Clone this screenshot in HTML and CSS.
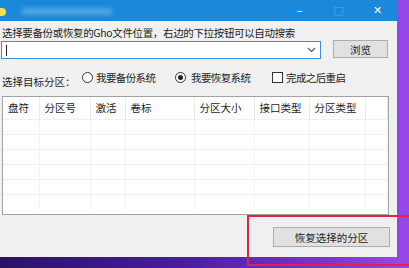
FILE: index.html
```html
<!DOCTYPE html>
<html lang="zh-CN">
<head>
    <meta charset="UTF-8">
    <title>一键恢复</title>
    <link rel="stylesheet" href="styles.css">
</head>
<body>
    <div class="window">
        <div class="titlebar">
            <span class="appIcon"></span>
            <span class="titleBlur"></span>
            <div class="controls">
                <span class="ctl">&#8211;</span>
                <span class="ctl dim">&#9633;</span>
                <span class="ctl">&#10005;</span>
            </div>
        </div>

        <div class="content">
            <div class="hint">选择要备份或恢复的Gho文件位置，右边的下拉按钮可以自动搜索</div>
            <div class="pathRow">
                <div class="combo">
                    <span class="caret"></span>
                    <svg class="chevron" width="9" height="6" viewBox="0 0 9 6"><path d="M1 1 L4.5 4.5 L8 1" fill="none" stroke="#555" stroke-width="1.1"/></svg>
                </div>
                <button class="btn browse">浏览</button>
            </div>

            <div class="optRow">
                <span class="optLabel">选择目标分区：</span>
                <label class="opt first"><span class="radio"></span>我要备份系统</label>
                <label class="opt second"><span class="radio checked"></span>我要恢复系统</label>
                <label class="opt"><span class="check"></span>完成之后重启</label>
            </div>

            <div class="listBox">
                <table class="list">
                    <colgroup>
                        <col style="width:36px"><col style="width:51px"><col style="width:35px"><col style="width:69px">
                        <col style="width:60px"><col style="width:55px"><col style="width:56px"><col>
                    </colgroup>
                    <thead>
                        <tr><th>盘符</th><th>分区号</th><th>激活</th><th>卷标</th><th>分区大小</th><th>接口类型</th><th>分区类型</th><th></th></tr>
                    </thead>
                    <tbody>
                        <tr><td></td><td></td><td></td><td></td><td></td><td></td><td></td><td></td></tr>
                        <tr><td></td><td></td><td></td><td></td><td></td><td></td><td></td><td></td></tr>
                        <tr><td></td><td></td><td></td><td></td><td></td><td></td><td></td><td></td></tr>
                        <tr><td></td><td></td><td></td><td></td><td></td><td></td><td></td><td></td></tr>
                        <tr><td></td><td></td><td></td><td></td><td></td><td></td><td></td><td></td></tr>
                        <tr><td></td><td></td><td></td><td></td><td></td><td></td><td></td><td></td></tr>
                    </tbody>
                </table>
            </div>

            <div class="footer">
                <button class="btn restore">恢复选择的分区</button>
            </div>
        </div>
    </div>

    <div class="highlight"></div>
</body>
</html>
```

FILE: styles.css
```css
body {
    margin: 0;
    width: 409px;
    height: 268px;
    overflow: hidden;
    position: relative;
    font-family: "Noto Sans CJK SC", "Noto Sans", sans-serif;
    font-size: 10.5px;
    color: #1c1c1c;
    background: linear-gradient(90deg, #2a1266 0%, #4a1d9c 45%, #7a34d8 80%, #9848ea 100%);
}
/* Fenster */
.window {
    width: 397px;
    height: 257px;
    background: #f0f0f0;
    display: flex;
    flex-direction: column;
}
.titlebar {
    height: 21px;
    background: #1b88d9;
    display: flex;
    align-items: center;
    flex-shrink: 0;
}
.appIcon {
    width: 6px;
    height: 8px;
    margin-top: 2px;
    background: #f2e04a;
    border-radius: 0 4px 4px 0;
}
.titleBlur {
    width: 90px;
    height: 7px;
    margin-left: 16px;
    margin-top: 2px;
    background: rgba(120, 190, 240, 0.55);
    filter: blur(2px);
}
.controls {
    margin-left: auto;
    display: flex;
    color: #fff;
}
.ctl {
    width: 39px;
    text-align: center;
    font-family: "DejaVu Sans", sans-serif;
    font-size: 11px;
    line-height: 21px;
}
.ctl.dim {
    color: #5aa9e6;
}
/* Inhalt */
.content {
    padding: 6px 0 0 2px;
    display: flex;
    flex-direction: column;
}
.hint {
    line-height: 12px;
    height: 12px;
    letter-spacing: -0.35px;
}
.pathRow {
    display: flex;
    align-items: flex-start;
    margin-top: 1px;
    margin-left: -1px;
}
.combo {
    width: 318px;
    height: 16px;
    margin-top: 1px;
    background: #fff;
    border: 1px solid #3c8fd8;
    display: flex;
    align-items: center;
}
.caret {
    width: 1px;
    height: 11px;
    margin-left: 4px;
    background: #222;
}
.chevron {
    margin-left: auto;
    margin-right: 4px;
}
.btn {
    font-family: inherit;
    font-size: 10.5px;
    color: #1c1c1c;
    background: #e1e1e1;
    border: 1px solid #adadad;
    padding: 0;
    cursor: pointer;
}
.browse {
    width: 55px;
    height: 18px;
    margin-left: 12px;
}
/* Optionen */
.optRow {
    display: flex;
    align-items: center;
    height: 14px;
    margin-top: 11px;
}
.optLabel {
    width: 80px;
    margin-top: 8px;
}
.opt {
    display: flex;
    align-items: center;
    gap: 3px;
    letter-spacing: -0.6px;
}
.opt.first {
    width: 93px;
}
.opt.second {
    width: 97px;
    gap: 5px;
}
.radio {
    width: 9px;
    height: 9px;
    border: 1px solid #333;
    border-radius: 50%;
    background: #fff;
    display: flex;
    align-items: center;
    justify-content: center;
}
.radio.checked::after {
    content: "";
    width: 5px;
    height: 5px;
    border-radius: 50%;
    background: #222;
}
.check {
    width: 9px;
    height: 9px;
    border: 1px solid #333;
    background: #fff;
}
/* Liste */
.listBox {
    width: 385px;
    height: 117px;
    margin-top: 12px;
    background: #fff;
    border: 1px solid #a3a3a3;
    overflow: hidden;
}
.list {
    width: 100%;
    table-layout: fixed;
    border-collapse: collapse;
}
.list th {
    height: 20px;
    padding: 0 0 2px 5px;
    text-align: left;
    font-weight: normal;
    border-right: 1px solid #e8e8e8;
}
.list td {
    height: 14px;
    padding: 0;
    border-top: 1px solid #efefef;
    border-right: 1px solid #f2f2f2;
}
.footer {
    display: flex;
    justify-content: flex-end;
    margin-top: 12px;
    padding-right: 7px;
}
.restore {
    width: 117px;
    height: 20px;
}
/* Markierung */
.highlight {
    position: absolute;
    left: 247px;
    top: 215px;
    width: 170px;
    height: 47px;
    border: 2px solid #e3233f;
}
```
